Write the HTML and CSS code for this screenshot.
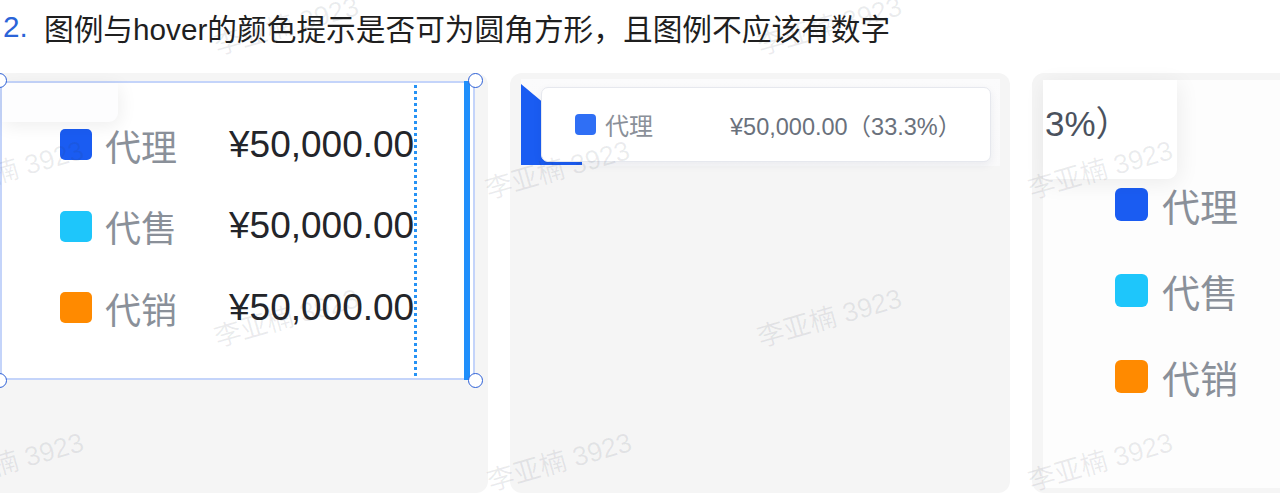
FILE: index.html
```html
<!DOCTYPE html>
<html lang="zh-CN">
<head>
<meta charset="utf-8">
<title>图例</title>
<link rel="stylesheet" href="styles.css">
</head>
<body>
<div class="page">
  <div class="title"><span class="num">2.</span><span class="txt">图例与hover的颜色提示是否可为圆角方形，且图例不应该有数字</span></div>
  <div class="row">
    <div class="panel p1">
      <div class="sel">
        <div class="remnant1"></div>
        <div class="legend1">
          <div class="lrow"><span class="sq sq-blue"></span><span class="name">代理</span><span class="val">¥50,000.00</span></div>
          <div class="lrow"><span class="sq sq-cyan"></span><span class="name">代售</span><span class="val">¥50,000.00</span></div>
          <div class="lrow"><span class="sq sq-orange"></span><span class="name">代销</span><span class="val">¥50,000.00</span></div>
        </div>
        <div class="dotline"></div>
        <div class="rbar"></div>
        <span class="handle h-tl"></span>
        <span class="handle h-tr"></span>
        <span class="handle h-bl"></span>
        <span class="handle h-br"></span>
      </div>
    </div>
    <div class="panel p2">
      <div class="chart2">
        <svg class="slice" width="62" height="86" viewBox="0 0 62 86"><polygon points="0,5 61,56 61,86 0,86" fill="#1a5cf2"/></svg>
        <div class="tip2">
          <span class="sq2"></span><span class="name2">代理</span><span class="val2">¥50,000.00（33.3%）</span>
        </div>
      </div>
    </div>
    <div class="panel p3">
      <div class="chart3">
        <div class="remnant3">3%）</div>
        <div class="legend3">
          <div class="lrow3"><span class="sq3 sq-blue"></span><span class="name3">代理</span></div>
          <div class="lrow3"><span class="sq3 sq-cyan"></span><span class="name3">代售</span></div>
          <div class="lrow3"><span class="sq3 sq-orange"></span><span class="name3">代销</span></div>
        </div>
      </div>
    </div>
  </div>
  <div class="wm-layer">
    <span class="wm" style="left:-56px;top:177px">李亚楠 3923</span>
    <span class="wm" style="left:-56px;top:469px">李亚楠 3923</span>
    <span class="wm" style="left:219px;top:325px">李亚楠 3923</span>
    <span class="wm" style="left:219px;top:33px">李亚楠 3923</span>
    <span class="wm" style="left:490px;top:177px">李亚楠 3923</span>
    <span class="wm" style="left:492px;top:469px">李亚楠 3923</span>
    <span class="wm" style="left:762px;top:325px">李亚楠 3923</span>
    <span class="wm" style="left:762px;top:33px">李亚楠 3923</span>
    <span class="wm" style="left:1033px;top:177px">李亚楠 3923</span>
    <span class="wm" style="left:1033px;top:469px">李亚楠 3923</span>
  </div>
</div>
</body>
</html>
```
FILE: styles.css
```css
html, body {
  margin: 0;
  padding: 0;
  background: #ffffff;
}
body {
  width: 1280px;
  height: 494px;
  overflow: hidden;
  font-family: "Liberation Sans", "Noto Sans CJK SC", sans-serif;
}
.page {
  position: relative;
  width: 1280px;
  height: 494px;
  overflow: hidden;
}
.title {
  display: flex;
  align-items: center;
  height: 54px;
  font-size: 29.7px;
  color: #1f1f1f;
  white-space: nowrap;
}
.title .num {
  color: #2a64d8;
  margin-left: 3px;
  width: 41px;
}
.row {
  display: flex;
  gap: 22px;
  margin-top: 19px;
  margin-left: -12px;
}
.panel {
  flex: 0 0 500px;
  height: 420px;
  background: #f5f5f5;
  border-radius: 12px;
  box-sizing: border-box;
}
/* Panel 1 */
.p1 {
  padding: 8px 13px 0 12px;
}
.sel {
  position: relative;
  width: 475px;
  height: 299px;
  box-sizing: border-box;
  border: 2px solid #c4d4fa;
  background: #ffffff;
}
.remnant1 {
  position: absolute;
  left: 0;
  top: 0;
  width: 116px;
  height: 39px;
  background: #fdfdfe;
  border-bottom-right-radius: 9px;
  box-shadow: 2px 4px 18px rgba(0, 0, 0, 0.07);
}
.legend1 {
  padding-top: 21px;
  padding-left: 58px;
}
.lrow {
  display: flex;
  align-items: center;
  height: 81.5px;
}
.sq {
  width: 32px;
  height: 31px;
  border-radius: 5px;
  margin-right: 13px;
}
.sq-blue { background: #1a5cf2; }
.sq-cyan { background: #1ec6fb; }
.sq-orange { background: #ff8a00; }
.name {
  width: 124px;
  font-size: 36px;
  color: #8a9099;
}
.val {
  font-size: 37px;
  color: #23252a;
}
.dotline {
  position: absolute;
  left: 412px;
  top: 2px;
  bottom: 2px;
  width: 0;
  border-left: 3px dotted #2592f5;
}
.rbar {
  position: absolute;
  right: 3px;
  top: -2px;
  bottom: -2px;
  width: 6px;
  background: #1f8ffb;
}
.handle {
  position: absolute;
  width: 13px;
  height: 13px;
  border-radius: 50%;
  background: #ffffff;
  border: 1.5px solid #2c5fd6;
}
.h-tl { left: -10px; top: -10px; }
.h-tr { right: -10px; top: -10px; }
.h-bl { left: -10px; bottom: -10px; }
.h-br { right: -10px; bottom: -10px; }
/* Panel 2 */
.p2 {
  padding: 6px 10px 0 11px;
}
.chart2 {
  position: relative;
  height: 87px;
  background: linear-gradient(180deg, #fbfbfc 0%, #f9f9fa 100%);
}
.slice {
  display: block;
}
.tip2 {
  position: absolute;
  left: 20px;
  top: 8px;
  width: 450px;
  height: 75px;
  box-sizing: border-box;
  display: flex;
  align-items: center;
  padding-left: 33px;
  background: #ffffff;
  border: 1px solid #e6e8ee;
  border-radius: 7px;
  box-shadow: 0 3px 8px rgba(30, 40, 80, 0.07);
}
.sq2 {
  width: 21px;
  height: 21px;
  border-radius: 4px;
  background: #2f6ff5;
  margin-right: 9px;
}
.name2 {
  width: 125px;
  font-size: 24px;
  color: #8a9099;
}
.val2 {
  font-size: 23.5px;
  color: #6a717c;
}
/* Panel 3 */
.p3 {
  padding: 7px 0 0 11px;
}
.chart3 {
  position: relative;
  height: 408px;
  background: #fdfdfd;
}
.remnant3 {
  position: absolute;
  left: 0;
  top: 0;
  width: 134px;
  height: 99px;
  box-sizing: border-box;
  padding: 15px 0 0 2px;
  background: #ffffff;
  border-bottom-right-radius: 9px;
  box-shadow: 2px 4px 22px rgba(0, 0, 0, 0.07);
  font-size: 35px;
  color: #4b525e;
}
.legend3 {
  padding-top: 81px;
  padding-left: 72px;
}
.lrow3 {
  display: flex;
  align-items: center;
  height: 86px;
}
.sq3 {
  width: 33px;
  height: 33px;
  border-radius: 6px;
  margin-right: 14px;
}
.name3 {
  font-size: 38px;
  color: #8a9099;
}
/* Watermarks */
.wm-layer {
  position: absolute;
  inset: 0;
  pointer-events: none;
}
.wm {
  position: absolute;
  font-size: 27px;
  line-height: 1;
  color: rgba(40, 50, 70, 0.09);
  white-space: nowrap;
  transform: rotate(-16deg);
  transform-origin: left bottom;
}
```
